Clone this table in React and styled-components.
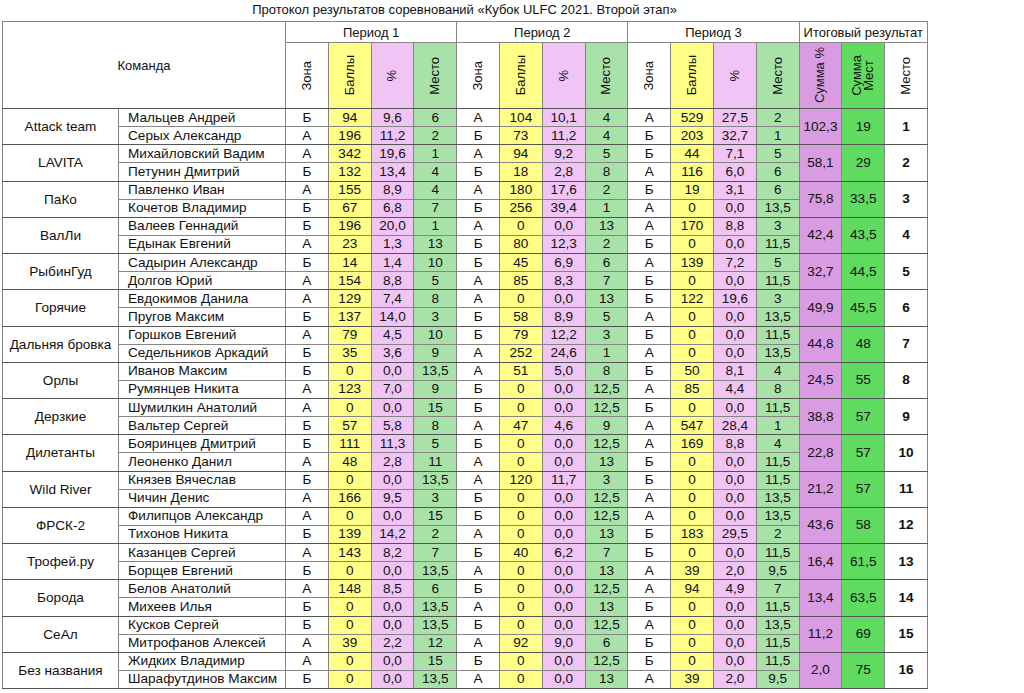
import React from "react";
import styled, { createGlobalStyle } from "styled-components";

const GlobalStyle = createGlobalStyle`
  html, body {
    margin: 0;
    padding: 0;
    background: #ffffff;
  }
  body {
    font-family: "Liberation Sans", Arial, sans-serif;
    color: #111;
  }
`;

const colors = {
  zone: "#ffffff",
  score: "#ffff88",
  pct: "#f0c4f4",
  place: "#a8e2a8",
  sumPct: "#d99ce2",
  sumPlace: "#5fdc5f",
  total: "#ffffff",
};

const Page = styled.div`
  width: 1024px;
  height: 693px;
  padding-left: 2px;
  box-sizing: border-box;
  overflow: hidden;
`;

const Title = styled.div`
  width: 925px;
  height: 21px;
  line-height: 20px;
  text-align: center;
  font-size: 13px;
`;

const Table = styled.table`
  width: 925px;
  table-layout: fixed;
  border-collapse: collapse;
  font-size: 13.6px;

  td,
  th {
    border: 1px solid #858585;
    padding: 0;
    overflow: hidden;
    white-space: nowrap;
  }
`;

const HeadRow = styled.tr`
  height: ${(p) => p.$h}px;
`;

const GroupHead = styled.th`
  font-weight: normal;
  font-size: 13px;
  text-align: center;
  vertical-align: middle;
  background: #ffffff;
`;

const TeamHead = styled(GroupHead)`
  border-bottom: 1px solid #555 !important;
`;

const ColHead = styled.th`
  font-weight: normal;
  font-size: 13px;
  background: ${(p) => colors[p.$kind]};
  vertical-align: middle;
  text-align: center;
  border-bottom: 1px solid #555 !important;
`;

const VertLabel = styled.div`
  writing-mode: vertical-rl;
  transform: rotate(180deg);
  margin: 0 auto;
  line-height: 12px;
  text-align: center;
`;

const Row = styled.tr`
  height: 18.125px;
`;

const Cell = styled.td`
  text-align: center;
  vertical-align: middle;
  line-height: 16px;
  background: ${(p) => colors[p.$kind]};
  border-bottom: ${(p) => (p.$groupEnd ? "1px solid #555" : "1px solid #858585")} !important;
  font-weight: ${(p) => (p.$bold ? "bold" : "normal")};
`;

const TeamCell = styled.td`
  text-align: center;
  vertical-align: middle;
  border-bottom: 1px solid #555 !important;
`;

const NameCell = styled.td`
  text-align: left;
  vertical-align: middle;
  padding-left: 9px !important;
  line-height: 16px;
  border-bottom: ${(p) => (p.$groupEnd ? "1px solid #555" : "1px solid #858585")} !important;
`;

const teams = [
  ["Attack team", "102,3", "19", "1", [
    ["Мальцев Андрей", "Б", "94", "9,6", "6", "А", "104", "10,1", "4", "А", "529", "27,5", "2"],
    ["Серых Александр", "А", "196", "11,2", "2", "Б", "73", "11,2", "4", "Б", "203", "32,7", "1"],
  ]],
  ["LAVITA", "58,1", "29", "2", [
    ["Михайловский Вадим", "А", "342", "19,6", "1", "А", "94", "9,2", "5", "Б", "44", "7,1", "5"],
    ["Петунин Дмитрий", "Б", "132", "13,4", "4", "Б", "18", "2,8", "8", "А", "116", "6,0", "6"],
  ]],
  ["ПаКо", "75,8", "33,5", "3", [
    ["Павленко Иван", "А", "155", "8,9", "4", "А", "180", "17,6", "2", "Б", "19", "3,1", "6"],
    ["Кочетов Владимир", "Б", "67", "6,8", "7", "Б", "256", "39,4", "1", "А", "0", "0,0", "13,5"],
  ]],
  ["ВалЛи", "42,4", "43,5", "4", [
    ["Валеев Геннадий", "Б", "196", "20,0", "1", "А", "0", "0,0", "13", "А", "170", "8,8", "3"],
    ["Едынак Евгений", "А", "23", "1,3", "13", "Б", "80", "12,3", "2", "Б", "0", "0,0", "11,5"],
  ]],
  ["РыбинГуд", "32,7", "44,5", "5", [
    ["Садырин Александр", "Б", "14", "1,4", "10", "Б", "45", "6,9", "6", "А", "139", "7,2", "5"],
    ["Долгов Юрий", "А", "154", "8,8", "5", "А", "85", "8,3", "7", "Б", "0", "0,0", "11,5"],
  ]],
  ["Горячие", "49,9", "45,5", "6", [
    ["Евдокимов Данила", "А", "129", "7,4", "8", "А", "0", "0,0", "13", "Б", "122", "19,6", "3"],
    ["Пругов Максим", "Б", "137", "14,0", "3", "Б", "58", "8,9", "5", "А", "0", "0,0", "13,5"],
  ]],
  ["Дальняя бровка", "44,8", "48", "7", [
    ["Горшков Евгений", "А", "79", "4,5", "10", "Б", "79", "12,2", "3", "Б", "0", "0,0", "11,5"],
    ["Седельников Аркадий", "Б", "35", "3,6", "9", "А", "252", "24,6", "1", "А", "0", "0,0", "13,5"],
  ]],
  ["Орлы", "24,5", "55", "8", [
    ["Иванов Максим", "Б", "0", "0,0", "13,5", "А", "51", "5,0", "8", "Б", "50", "8,1", "4"],
    ["Румянцев Никита", "А", "123", "7,0", "9", "Б", "0", "0,0", "12,5", "А", "85", "4,4", "8"],
  ]],
  ["Дерзкие", "38,8", "57", "9", [
    ["Шумилкин Анатолий", "А", "0", "0,0", "15", "Б", "0", "0,0", "12,5", "Б", "0", "0,0", "11,5"],
    ["Вальтер Сергей", "Б", "57", "5,8", "8", "А", "47", "4,6", "9", "А", "547", "28,4", "1"],
  ]],
  ["Дилетанты", "22,8", "57", "10", [
    ["Бояринцев Дмитрий", "Б", "111", "11,3", "5", "Б", "0", "0,0", "12,5", "А", "169", "8,8", "4"],
    ["Леоненко Данил", "А", "48", "2,8", "11", "А", "0", "0,0", "13", "Б", "0", "0,0", "11,5"],
  ]],
  ["Wild River", "21,2", "57", "11", [
    ["Князев Вячеслав", "Б", "0", "0,0", "13,5", "А", "120", "11,7", "3", "Б", "0", "0,0", "11,5"],
    ["Чичин Денис", "А", "166", "9,5", "3", "Б", "0", "0,0", "12,5", "А", "0", "0,0", "13,5"],
  ]],
  ["ФРСК-2", "43,6", "58", "12", [
    ["Филипцов Александр", "А", "0", "0,0", "15", "Б", "0", "0,0", "12,5", "А", "0", "0,0", "13,5"],
    ["Тихонов Никита", "Б", "139", "14,2", "2", "А", "0", "0,0", "13", "Б", "183", "29,5", "2"],
  ]],
  ["Трофей.ру", "16,4", "61,5", "13", [
    ["Казанцев Сергей", "А", "143", "8,2", "7", "Б", "40", "6,2", "7", "Б", "0", "0,0", "11,5"],
    ["Борщев Евгений", "Б", "0", "0,0", "13,5", "А", "0", "0,0", "13", "А", "39", "2,0", "9,5"],
  ]],
  ["Борода", "13,4", "63,5", "14", [
    ["Белов Анатолий", "А", "148", "8,5", "6", "Б", "0", "0,0", "12,5", "А", "94", "4,9", "7"],
    ["Михеев Илья", "Б", "0", "0,0", "13,5", "А", "0", "0,0", "13", "Б", "0", "0,0", "11,5"],
  ]],
  ["СеАл", "11,2", "69", "15", [
    ["Кусков Сергей", "Б", "0", "0,0", "13,5", "Б", "0", "0,0", "12,5", "А", "0", "0,0", "13,5"],
    ["Митрофанов Алексей", "А", "39", "2,2", "12", "А", "92", "9,0", "6", "Б", "0", "0,0", "11,5"],
  ]],
  ["Без названия", "2,0", "75", "16", [
    ["Жидких Владимир", "А", "0", "0,0", "15", "Б", "0", "0,0", "12,5", "Б", "0", "0,0", "11,5"],
    ["Шарафутдинов Максим", "Б", "0", "0,0", "13,5", "А", "0", "0,0", "13", "А", "39", "2,0", "9,5"],
  ]],
];

const periodKinds = ["zone", "score", "pct", "place"];
const periodLabels = ["Зона", "Баллы", "%", "Место"];

const App = () => {
  return (
    <Page>
      <GlobalStyle />
      <Title>Протокол результатов соревнований «Кубок ULFC 2021. Второй этап»</Title>

      <Table>
        <colgroup>
          <col style={{ width: 116 }} />
          <col style={{ width: 167 }} />
          {Array.from({ length: 15 }).map((_, i) => (
            <col key={i} style={{ width: 42.8 }} />
          ))}
        </colgroup>

        <thead>
          {/* <--- Period row ---> */}
          <HeadRow $h={21}>
            <TeamHead colSpan={2} rowSpan={2}>Команда</TeamHead>
            <GroupHead colSpan={4}>Период 1</GroupHead>
            <GroupHead colSpan={4}>Период 2</GroupHead>
            <GroupHead colSpan={4}>Период 3</GroupHead>
            <GroupHead colSpan={3}>Итоговый результат</GroupHead>
          </HeadRow>

          {/* <--- Column labels ---> */}
          <HeadRow $h={66}>
            {[0, 1, 2].map((p) =>
              periodKinds.map((kind, i) => (
                <ColHead key={`${p}-${kind}`} $kind={kind}>
                  <VertLabel>{periodLabels[i]}</VertLabel>
                </ColHead>
              ))
            )}
            <ColHead $kind="sumPct">
              <VertLabel>Сумма %</VertLabel>
            </ColHead>
            <ColHead $kind="sumPlace">
              <VertLabel>
                Сумма
                <br />
                Мест
              </VertLabel>
            </ColHead>
            <ColHead $kind="total">
              <VertLabel>Место</VertLabel>
            </ColHead>
          </HeadRow>
        </thead>

        <tbody>
          {teams.map(([team, sumPct, sumPlace, place, members]) =>
            members.map((m, idx) => {
              const groupEnd = idx === 1;
              return (
                <Row key={`${team}-${idx}`}>
                  {idx === 0 && <TeamCell rowSpan={2}>{team}</TeamCell>}
                  <NameCell $groupEnd={groupEnd}>{m[0]}</NameCell>
                  {m.slice(1).map((v, i) => (
                    <Cell key={i} $kind={periodKinds[i % 4]} $groupEnd={groupEnd}>
                      {v}
                    </Cell>
                  ))}
                  {idx === 0 && (
                    <>
                      <Cell rowSpan={2} $kind="sumPct" $groupEnd>
                        {sumPct}
                      </Cell>
                      <Cell rowSpan={2} $kind="sumPlace" $groupEnd>
                        {sumPlace}
                      </Cell>
                      <Cell rowSpan={2} $kind="total" $groupEnd $bold>
                        {place}
                      </Cell>
                    </>
                  )}
                </Row>
              );
            })
          )}
        </tbody>
      </Table>
    </Page>
  );
};

export default App;
